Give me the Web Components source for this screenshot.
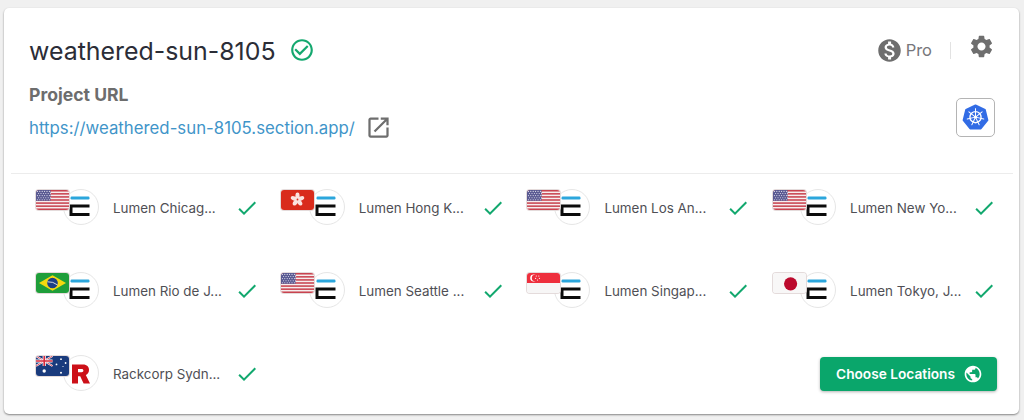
<!DOCTYPE html>
<html lang="en"><head><meta charset="utf-8"><title>Project</title>
<style>
html,body{margin:0;height:420px;overflow:hidden;background:#f0f0f0;font-family:Inter,"Liberation Sans",sans-serif}
body{padding:8px 5px 6px 4px;box-sizing:border-box;display:flex}
</style></head><body>
<project-card name="weathered-sun-8105" url="https://weathered-sun-8105.section.app/">
  <loc-item flag="us" logo="e">Lumen Chicag...</loc-item>
  <loc-item flag="hk" logo="e">Lumen Hong K...</loc-item>
  <loc-item flag="us" logo="e">Lumen Los An...</loc-item>
  <loc-item flag="us" logo="e">Lumen New Yo...</loc-item>
  <loc-item flag="br" logo="e">Lumen Rio de J...</loc-item>
  <loc-item flag="us" logo="e">Lumen Seattle ...</loc-item>
  <loc-item flag="sg" logo="e">Lumen Singap...</loc-item>
  <loc-item flag="jp" logo="e">Lumen Tokyo, J...</loc-item>
  <loc-item flag="au" logo="r">Rackcorp Sydn...</loc-item>
  <green-button slot="action">Choose Locations</green-button>
</project-card>
<script>
const P={
 check:'M9 16.17L4.83 12l-1.42 1.41L9 19 21 7l-1.41-1.41z',
 ok:'M16.59 7.58L10 14.17l-3.59-3.58L5 12l5 5 8-8zM12 2C6.48 2 2 6.48 2 12s4.48 10 10 10 10-4.48 10-10S17.52 2 12 2zm0 18c-4.42 0-8-3.58-8-8s3.58-8 8-8 8 3.58 8 8-3.58 8-8 8z',
 open:'M19 19H5V5h7V3H5c-1.11 0-2 .9-2 2v14c0 1.1.89 2 2 2h14c1.1 0 2-.9 2-2v-7h-2v7zM14 3v2h3.59l-9.83 9.83 1.41 1.41L19 6.41V10h2V3h-7z',
 money:'M12 2C6.48 2 2 6.48 2 12s4.48 10 10 10 10-4.48 10-10S17.52 2 12 2zm1.41 16.09V20h-2.67v-1.93c-1.71-.36-3.16-1.46-3.27-3.4h1.96c.1 1.05.82 1.87 2.65 1.87 1.96 0 2.4-.98 2.4-1.59 0-.83-.44-1.61-2.67-2.14-2.48-.6-4.18-1.62-4.18-3.67 0-1.72 1.39-2.84 3.11-3.21V4h2.67v1.95c1.86.45 2.79 1.86 2.87 3.39H14.3c-.05-1.11-.64-1.87-2.22-1.87-1.5 0-2.4.68-2.4 1.64 0 .84.65 1.39 2.67 1.91s4.18 1.39 4.18 3.91c-.01 1.83-1.38 2.83-3.12 3.16z',
 gear:'M19.14 12.94c.04-.3.06-.61.06-.94 0-.32-.02-.64-.07-.94l2.03-1.58c.18-.14.23-.41.12-.61l-1.92-3.32c-.12-.22-.37-.29-.59-.22l-2.39.96c-.5-.38-1.03-.7-1.62-.94l-.36-2.54c-.04-.24-.24-.41-.48-.41h-3.84c-.24 0-.43.17-.47.41l-.36 2.54c-.59.24-1.13.57-1.62.94l-2.39-.96c-.22-.08-.47 0-.59.22L2.74 8.87c-.12.21-.08.47.12.61l2.03 1.58c-.05.3-.09.63-.09.94s.02.64.07.94l-2.03 1.58c-.18.14-.23.41-.12.61l1.92 3.32c.12.22.37.29.59.22l2.39-.96c.5.38 1.03.7 1.62.94l.36 2.54c.05.24.24.41.48.41h3.84c.24 0 .44-.17.47-.41l.36-2.54c.59-.24 1.13-.56 1.62-.94l2.39.96c.22.08.47 0 .59-.22l1.92-3.32c.12-.22.07-.47-.12-.61l-2.01-1.58zM12 15.6c-1.98 0-3.6-1.62-3.6-3.6s1.62-3.6 3.6-3.6 3.6 1.62 3.6 3.6-1.62 3.6-3.6 3.6z',
 globe:'M12 2C6.48 2 2 6.48 2 12s4.48 10 10 10 10-4.48 10-10S17.52 2 12 2zm-1 17.93c-3.95-.49-7-3.85-7-7.93 0-.62.08-1.21.21-1.79L9 15v1c0 1.1.9 2 2 2v1.93zm6.9-2.54c-.26-.81-1-1.39-1.9-1.39h-1v-3c0-.55-.45-1-1-1H8v-2h2c.55 0 1-.45 1-1V7h2c1.1 0 2-.9 2-2v-.41c2.93 1.19 5 4.06 5 7.41 0 2.08-.8 3.97-2.1 5.39z'
};
const ic=(n,s,c)=>`<svg width="${s}" height="${s}" viewBox="0 0 24 24" fill="${c}" aria-hidden="true"><path d="${P[n]}"/></svg>`;

const usStripes=[0,2,4,6,8,10,12].map(i=>`<rect y="${i*20/13}" width="33" height="${20/13}" fill="#c8434f"/>`).join('');
let stars='';for(let r=0;r<5;r++)for(let c=0;c<6;c++)stars+=`<circle cx="${1.4+c*2.4+(r%2?1.2:0)}" cy="${1.4+r*2.1}" r=".55" fill="#e4e4f0"/>`;
const auStar=(x,y,r)=>`<circle cx="${x}" cy="${y}" r="${r}" fill="#fff"/>`;
const FLAGS={
 us:`<rect width="33" height="20" fill="#f6eeee"/>${usStripes}<rect width="14.5" height="10.8" fill="#5a5a92"/>${stars}`,
 hk:`<rect width="33" height="20" fill="#d92b1c"/><g fill="#fbe3e0" transform="translate(16.5 9.5)">${[0,72,144,216,288].map(a=>`<ellipse cx="0" cy="-3.6" rx="2.1" ry="3.4" transform="rotate(${a})"/>`).join('')}</g><circle cx="16.5" cy="9.5" r=".9" fill="#d92b1c"/>`,
 br:`<rect width="33" height="20" fill="#1f9e3a"/><polygon points="16.5,2.2 30,10 16.5,17.8 3,10" fill="#f5d90f"/><circle cx="16.5" cy="10" r="5.3" fill="#1d3f86"/><path d="M11.5 8.8 Q17 8.4 21.6 12" stroke="#e8e8e8" stroke-width=".9" fill="none"/>`,
 sg:`<rect width="33" height="20" fill="#f7f6f6"/><rect width="33" height="10" fill="#ee2f3d"/><circle cx="6.6" cy="5" r="3.4" fill="#fff"/><circle cx="8" cy="5" r="3.2" fill="#ee2f3d"/><g fill="#fff"><circle cx="9.3" cy="3" r=".6"/><circle cx="11.8" cy="3" r=".6"/><circle cx="8.6" cy="5.3" r=".6"/><circle cx="12.4" cy="5.3" r=".6"/><circle cx="10.5" cy="7" r=".6"/></g>`,
 jp:`<rect width="33" height="20" fill="#f8f7f7"/><circle cx="17.6" cy="10.8" r="6.6" fill="#bc0a2d"/>`,
 au:`<rect width="33" height="20" fill="#1a3b7d"/><path d="M0 0L16.5 10M16.5 0L0 10" stroke="#fff" stroke-width="2"/><path d="M0 0L16.5 10M16.5 0L0 10" stroke="#d5283c" stroke-width=".8"/><path d="M8.25 0V10M0 5H16.5" stroke="#fff" stroke-width="3.2"/><path d="M8.25 0V10M0 5H16.5" stroke="#d5283c" stroke-width="1.7"/>${auStar(8.2,15,1.7)}${auStar(25,3.2,.9)}${auStar(25,16.8,1)}${auStar(20.5,8.4,.9)}${auStar(29.6,7,.9)}${auStar(27,10.5,.6)}`
};

class FlagChip extends HTMLElement{constructor(){super();this.attachShadow({mode:'open'})}
 connectedCallback(){const k=this.getAttribute('code');if(!k)return;this.shadowRoot.innerHTML=`<style>
 :host{display:block;width:33px;height:20px;border-radius:3px;overflow:hidden;box-shadow:0 0 0 1px rgba(225,215,215,.9)}
 svg{display:block}</style><svg width="33" height="20" viewBox="0 0 33 20" role="img" aria-label="${k} flag">${FLAGS[k]}</svg>`}}
customElements.define('flag-chip',FlagChip);

class ProviderLogo extends HTMLElement{constructor(){super();this.attachShadow({mode:'open'})}
 connectedCallback(){const r=this.getAttribute('kind')==='r';this.shadowRoot.innerHTML=`<style>
 :host{display:flex;width:36px;height:36px;box-sizing:border-box;border:1.5px solid #e6e6e6;border-radius:50%;background:#fff}
 svg{display:block}</style><svg width="33" height="33" viewBox="0 0 33 33" aria-hidden="true">${r
 ?`<path fill-rule="evenodd" d="M8 8.5H19c4 0 6 2.4 6 5.6 0 2.4-1.2 4.2-3.2 5L26 27.5h-6.4l-3.4-7.2h-2.2v7.2H8zM14 13v3.2h3.6c1.2 0 1.8-.6 1.8-1.6S18.8 13 17.6 13z" fill="#cc1018"/>`
 :`<rect x="6.5" y="6.5" width="19" height="3" rx="1.2" fill="#2ba6dc"/><path d="M25.5 16H7V24.5H25.5" fill="none" stroke="#0c0c0c" stroke-width="3"/>`}</svg>`}}
customElements.define('provider-logo',ProviderLogo);

const locT=document.createElement('template');
locT.innerHTML=`<style>
:host{display:block;height:83px;box-sizing:border-box;position:relative;font:14px/20px Inter,"Liberation Sans",sans-serif;color:#4f4f55}
.row{display:flex;align-items:center;height:36px;margin-top:15px;padding-left:29px}
provider-logo{flex:none}
.name{flex:none;width:125px;margin-left:14px;white-space:nowrap;font-size:13.4px;position:relative;top:1px}
svg{flex:none;display:block}
.flag{position:absolute;left:1.5px;top:16px}
</style><div class="row"><provider-logo></provider-logo><span class="name"><slot></slot></span><span id="c"></span></div><flag-chip class="flag"></flag-chip>`;
class LocItem extends HTMLElement{constructor(){super();this.attachShadow({mode:'open'}).appendChild(locT.content.cloneNode(true))}
 connectedCallback(){const s=this.shadowRoot;const l=s.querySelector('provider-logo');l.setAttribute('kind',this.getAttribute('logo'));l.connectedCallback();
 const f=s.querySelector('flag-chip');f.setAttribute('code',this.getAttribute('flag'));f.connectedCallback();
 const c=s.getElementById('c');c.innerHTML=ic('check',24,'#12a86e');c.style.cssText='display:block;margin-left:-3px;height:24px;position:relative;top:1px'}}
customElements.define('loc-item',LocItem);

class GreenButton extends HTMLElement{constructor(){super();this.attachShadow({mode:'open'}).innerHTML=`<style>
:host{display:inline-flex;align-items:center;box-sizing:border-box;width:177px;height:34px;padding:0 14px 0 16px;justify-content:space-between;background:#0aa66b;border-radius:4px;color:#fff;font:600 13.7px/20px Inter,"Liberation Sans",sans-serif;box-shadow:0 1px 3px rgba(0,0,0,.3)}
svg{display:block}</style><span><slot></slot></span>${ic('globe',20,'#fff')}`}}
customElements.define('green-button',GreenButton);

const spokes=[0,1,2,3,4,5,6].map(i=>`<line x1="15" y1="14.6" x2="15" y2="5.2" transform="rotate(${i*360/7} 15 14.6)"/>`).join('');
class ProjectCard extends HTMLElement{constructor(){super();this.attachShadow({mode:'open'})}
 connectedCallback(){const n=this.getAttribute('name'),u=this.getAttribute('url');this.shadowRoot.innerHTML=`<style>
:host{display:flex;flex-direction:column;flex:1;box-sizing:border-box;background:#fff;border-radius:5px;box-shadow:0 1px 2px rgba(0,0,0,.45);color:#2d2f38}
header{height:165px;flex:none;display:flex;justify-content:space-between;box-sizing:border-box;padding:26px 24px 0 25px}
.l{display:flex;flex-direction:column}
.title{display:flex;align-items:center;height:34px}
h1{margin:0;font:400 24.9px/34px Inter,"Liberation Sans",sans-serif;color:#2b2d37}
.title svg{margin-left:13px;position:relative;top:-1px}
h2{margin:17px 0 0;font:700 17.6px/20px Inter,"Liberation Sans",sans-serif;color:#6d6d6d}
.url{display:flex;align-items:center;margin-top:9px}
a{color:#3f95c9;text-decoration:none;font:400 16.8px/24px Inter,"Liberation Sans",sans-serif}
.url svg{margin-left:10px}
.r{display:flex;flex-direction:column;align-items:flex-end}
.top{display:flex;align-items:center;height:34px;margin-top:-1px;color:#77777b;font-size:16.5px}
.pro{margin-left:3px}
.sep{width:1px;height:17px;background:#e2e2e2;margin:0 17px 0 18px}
.gear{position:relative;top:-4px;display:block;height:27px}
.k8s{width:39px;height:39px;box-sizing:border-box;border:1px solid #b4b4b4;border-radius:5px;margin-top:31px;display:flex;align-items:center;justify-content:center}
hr{margin:0 6px 0 7px;border:0;border-top:1px solid #ececec;flex:none}
.grid{display:grid;grid-template-columns:repeat(4,245.7px);grid-auto-rows:83px;padding-left:30px}
.act{grid-column:4;align-self:start;margin-top:17px;margin-left:49px;display:block}
</style>
<header><div class="l"><div class="title"><h1>${n}</h1>${ic('ok',26,'#14a86f')}</div>
<h2>Project URL</h2><div class="url"><a href="#">${u}</a>${ic('open',27,'#6e6e6e')}</div></div>
<div class="r"><div class="top">${ic('money',27,'#6e6e6e')}<span class="pro">Pro</span><span class="sep"></span><span class="gear">${ic('gear',27,'#6e6e6e')}</span></div>
<div class="k8s"><svg width="27" height="27" viewBox="0 0 30 30" role="img" aria-label="Kubernetes"><polygon points="15,1.5 25.5,6.5 28.3,18 20.9,27.2 9.1,27.2 1.7,18 4.5,6.5" fill="#326ce5" stroke="#326ce5" stroke-width="2" stroke-linejoin="round"/><g fill="none" stroke="#fff"><circle cx="15" cy="14.6" r="6.2" stroke-width="1.5"/><g stroke-width="1.1" stroke-linecap="round">${spokes}</g><circle cx="15" cy="14.6" r="1.5" fill="#fff" stroke="none"/></g></svg></div></div></header>
<hr><div class="grid"><slot></slot><div class="act"><slot name="action"></slot></div></div>`}}
customElements.define('project-card',ProjectCard);
</script></body></html>
